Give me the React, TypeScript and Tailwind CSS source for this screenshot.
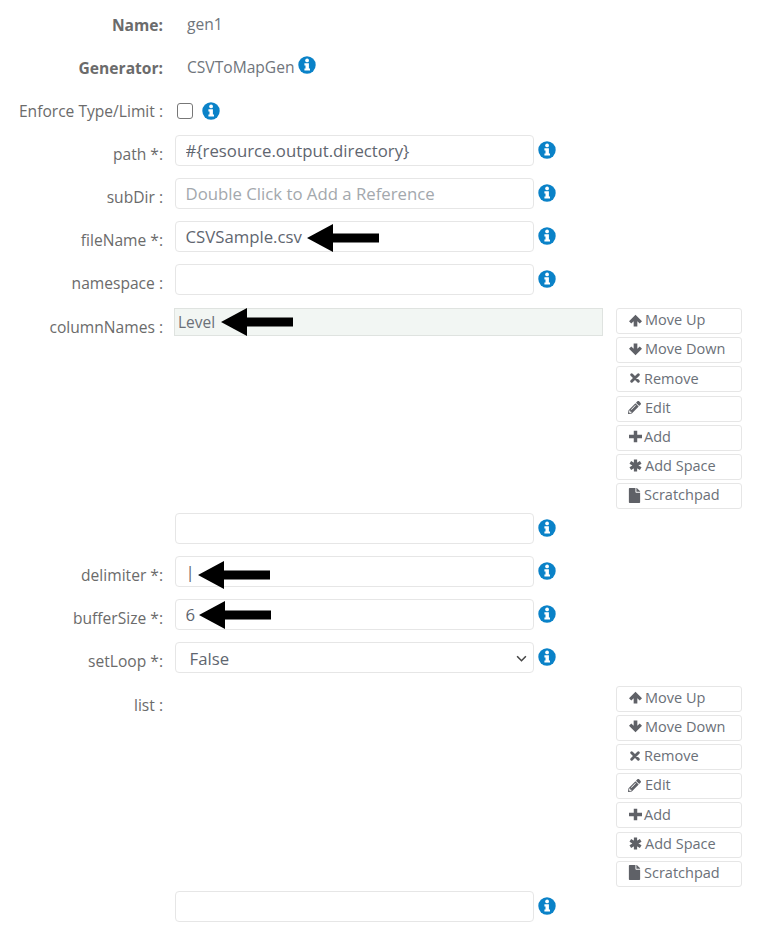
import React from "react";
import { FaPencilAlt, FaFile } from "react-icons/fa";

function Info() {
  return (
    <svg viewBox="0 0 18 18" className="w-[18px] h-[18px] shrink-0 block">
      <circle cx="9" cy="9" r="8.7" fill="#0a82c8" />
      <circle cx="9.1" cy="4.4" r="1.9" fill="#fff" />
      <path d="M6.4 7.2 H10.9 V12.4 H12 V14.6 H6.4 V12.4 H7.5 V9.4 H6.4 Z" fill="#fff" />
    </svg>
  );
}

function Arrow({ left, top }: { left: string; top: string }) {
  return (
    <svg
      width="72"
      height="28"
      viewBox="0 0 72 28"
      className="absolute pointer-events-none"
      style={{ left, top }}
    >
      <path d="M0 14 L26 0 V9.5 H72 V18.5 H26 V28 Z" fill="#000" />
    </svg>
  );
}

function Label({ children, bold, inputRow }: { children: React.ReactNode; bold?: boolean; inputRow?: boolean }) {
  return (
    <div
      className={`w-[163px] shrink-0 text-right text-[15.6px] text-[#6b6b6b] ${bold ? "font-bold" : ""} ${
        inputRow ? "pt-[9px]" : ""
      }`}
    >
      {children}
    </div>
  );
}

function TextRow({
  label,
  value,
  placeholder,
  arrowLeft,
  arrowTop,
  className,
}: {
  label: string;
  value?: string;
  placeholder?: string;
  arrowLeft?: string;
  arrowTop?: string;
  className?: string;
}) {
  return (
    <div className={`flex items-center h-[31px] ${className ?? ""}`}>
      <Label inputRow>{label}</Label>
      <div className="relative ml-[11.5px] w-[359px] h-[31px]">
        <input
          readOnly
          defaultValue={value}
          placeholder={placeholder}
          className="w-full h-full border border-[#e6e6e6] rounded-[4px] bg-white pl-[10px] pr-[10px] pb-[1px] text-[16.75px] text-[#5f6670] placeholder:text-[#a3a8ad] outline-none"
        />
        {arrowLeft && <Arrow left={arrowLeft} top={arrowTop ?? "1px"} />}
      </div>
      <div className="ml-[4px] -mt-[2px]">
        <Info />
      </div>
    </div>
  );
}

const IconUp = () => (
  <svg viewBox="0 0 12 12" className="w-[13px] h-[13px] shrink-0">
    <path d="M6 .8 L12 6.8 L9.9 8.8 L7.7 6.6 V11.6 H4.3 V6.6 L2.1 8.8 L0 6.8 Z" fill="#5f6167" />
  </svg>
);
const IconDown = () => (
  <svg viewBox="0 0 12 12" className="w-[13px] h-[13px] shrink-0">
    <path d="M6 11.2 L12 5.2 L9.9 3.2 L7.7 5.4 V.4 H4.3 V5.4 L2.1 3.2 L0 5.2 Z" fill="#5f6167" />
  </svg>
);
const IconRemove = () => (
  <svg viewBox="0 0 12 12" className="w-[10px] h-[10px] shrink-0">
    <path d="M2 2 L10 10 M10 2 L2 10" stroke="#5f6167" strokeWidth="3.4" strokeLinecap="round" />
  </svg>
);
const IconEdit = () => <FaPencilAlt className="w-[13px] h-[13px] text-[#5f6167] shrink-0" />;
const IconPlus = () => (
  <svg viewBox="0 0 12 12" className="w-[13px] h-[13px] shrink-0">
    <path d="M4.4 .6 H7.6 V4.4 H12 V7.6 H7.6 V11.4 H4.4 V7.6 H0 V4.4 H4.4 Z" fill="#5f6167" />
  </svg>
);
const IconStar = () => (
  <svg viewBox="0 0 12 12" className="w-[13px] h-[13px] shrink-0">
    <path d="M6 .5 V11.5 M1.2 3.2 L10.8 8.8 M10.8 3.2 L1.2 8.8" stroke="#5f6167" strokeWidth="3" />
  </svg>
);
const IconFile = () => <FaFile className="w-[13px] h-[15px] text-[#5f6167] shrink-0" />;

const buttons = [
  { icon: IconUp, text: "Move Up", pad: "pl-[12px]", gap: "gap-[3px]" },
  { icon: IconDown, text: "Move Down", pad: "pl-[12px]", gap: "gap-[3px]" },
  { icon: IconRemove, text: "Remove", pad: "pl-[13px]", gap: "gap-[4px]" },
  { icon: IconEdit, text: "Edit", pad: "pl-[11px]", gap: "gap-[4px]" },
  { icon: IconPlus, text: "Add", pad: "pl-[12px]", gap: "gap-[2px]" },
  { icon: IconStar, text: "Add Space", pad: "pl-[12px]", gap: "gap-[3px]" },
  { icon: IconFile, text: "Scratchpad", pad: "pl-[11px]", gap: "gap-[3px]" },
];

function ButtonColumn() {
  return (
    <div className="flex flex-col gap-[3.2px] w-[126px]">
      {buttons.map((b) => {
        const Icon = b.icon;
        return (
          <button
            key={b.text}
            className={`flex items-center h-[26px] border border-[#e6e6e6] rounded-[3px] bg-white text-[14.5px] text-[#6b7078] pb-[2px] ${b.pad} ${b.gap}`}
          >
            <Icon />
            <span>{b.text}</span>
          </button>
        );
      })}
    </div>
  );
}

export default function App() {
  return (
    <div
      className="w-[765px] h-[948px] bg-white text-[15.6px] text-[#6b6b6b] overflow-hidden pt-[10px]"
      style={{ fontFamily: '"Open Sans", sans-serif' }}
    >
      <div className="flex items-center h-[31px]">
        <Label bold>Name:</Label>
        <div className="ml-[24px] -mt-[2px] text-[#6f757c]">gen1</div>
      </div>
      <div className="flex items-center h-[31px] mt-[12px]">
        <Label bold>Generator:</Label>
        <div className="ml-[24px] -mt-[2px] text-[#6f757c]">CSVToMapGen</div>
        <div className="ml-[3px] -mt-[7px]">
          <Info />
        </div>
      </div>
      <div className="flex items-center h-[31px] mt-[12px]">
        <Label>Enforce Type/Limit :</Label>
        <div className="ml-[14px] -mt-[2px] w-[16px] h-[16px] border border-[#777] rounded-[3px] bg-white" />
        <div className="ml-[9px] -mt-[2px]">
          <Info />
        </div>
      </div>

      <TextRow className="mt-[8px]" label="path *:" value="#{resource.output.directory}" />
      <TextRow className="mt-[12px]" label="subDir :" placeholder="Double Click to Add a Reference" />
      <TextRow
        className="mt-[12px]"
        label="fileName *:"
        value="CSVSample.csv"
        arrowLeft="132.5px"
        arrowTop="3px"
      />
      <TextRow className="mt-[12px]" label="namespace :" />

      <div className="flex mt-[13px]">
        <div className="pt-[8px]">
          <Label>columnNames :</Label>
        </div>
        <div className="relative ml-[11px] w-[429px] h-[28px] bg-[#f2f6f3] border border-[#dfe3e0] pl-[3px] text-[#6b7078] text-[15.5px] leading-[26px]">
          Level
          <Arrow left="46px" top="-1px" />
        </div>
        <div className="ml-[13px]">
          <ButtonColumn />
        </div>
      </div>

      <TextRow className="mt-[4px]" label="" />
      <TextRow className="mt-[12px]" label="delimiter *:" value="|" arrowLeft="23.5px" arrowTop="5px" />
      <TextRow className="mt-[12px]" label="bufferSize *:" value="6" arrowLeft="24.5px" arrowTop="2px" />

      <div className="flex items-center h-[31px] mt-[12px]">
        <Label inputRow>setLoop *:</Label>
        <div className="relative ml-[11.5px] w-[359px] h-[31px] border border-[#e6e6e6] rounded-[4px] bg-white pl-[14px] pt-[1px] flex items-center text-[16.75px] text-[#5f6670]">
          False
          <svg viewBox="0 0 12 8" className="absolute right-[6px] top-[12px] w-[11px] h-[7px]">
            <path d="M1 1.5 L6 6.5 L11 1.5" fill="none" stroke="#444" strokeWidth="1.8" />
          </svg>
        </div>
        <div className="ml-[4px] -mt-[1px]">
          <Info />
        </div>
      </div>

      <div className="flex mt-[12.6px]">
        <div className="pt-[8.4px]">
          <Label>list :</Label>
        </div>
        <div className="ml-[11px] w-[429px]" />
        <div className="ml-[13px]">
          <ButtonColumn />
        </div>
      </div>

      <TextRow className="mt-[4.4px]" label="" />
    </div>
  );
}
